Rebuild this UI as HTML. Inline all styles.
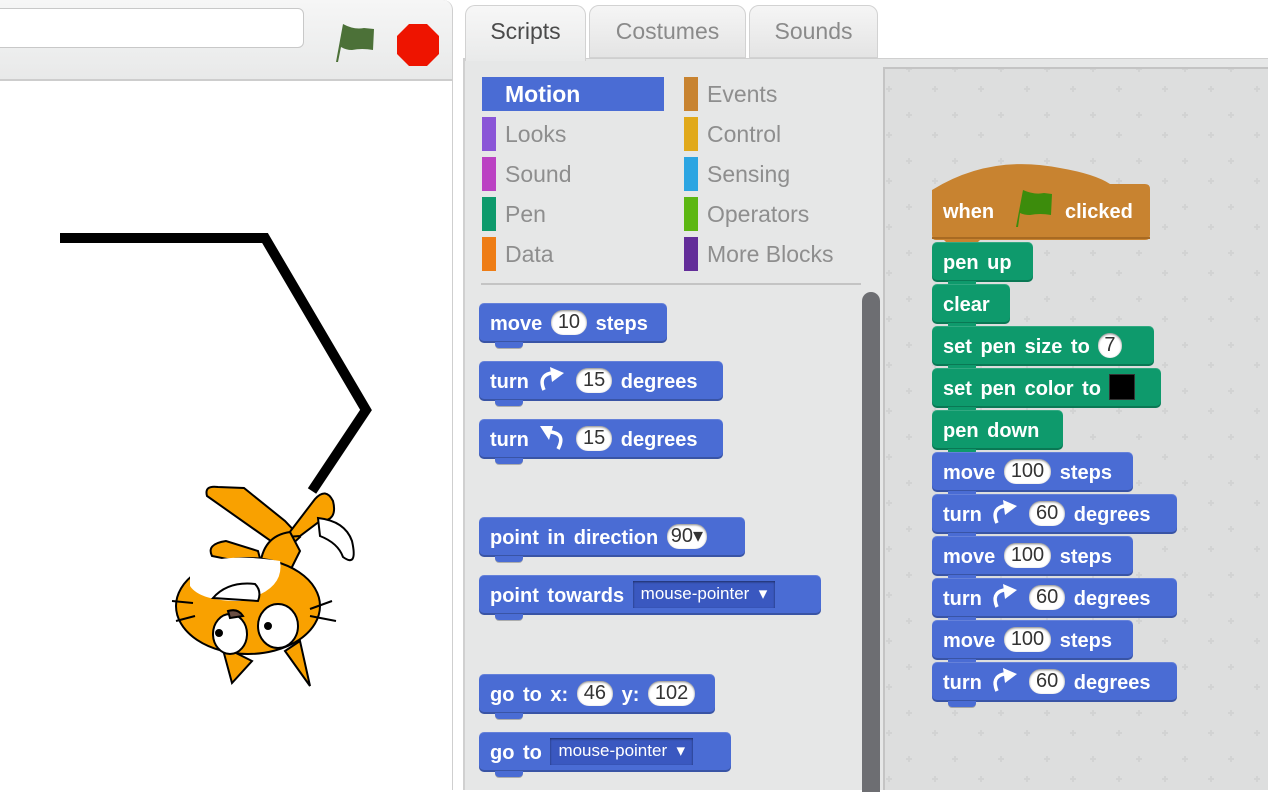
<!DOCTYPE html>
<html><head><meta charset="utf-8"><style>
*{margin:0;padding:0;box-sizing:border-box}
body{width:1268px;height:790px;overflow:hidden;background:#fff;position:relative;font-family:"Liberation Sans",sans-serif}
.abs{position:absolute}
.blk{position:absolute;height:40px;border-radius:5px;color:#fff;font-weight:bold;font-size:20px;word-spacing:3px;line-height:43px;padding-left:11px;white-space:nowrap;box-shadow:inset 0 -2px 0 rgba(0,0,0,.22),inset 0 1px 0 rgba(255,255,255,.15)}
.blk::after{content:"";position:absolute;left:16px;bottom:-5px;width:28px;height:6px;background:inherit;border-radius:0 0 4px 4px;box-shadow:0 1px 0 rgba(0,0,0,.25)}
.m{background:#4a6cd4}
.p{background:#0e9a6c}
.in{display:inline-block;background:#fff;color:#333;font-weight:normal;border-radius:12px;padding:0 7px;height:25px;line-height:25px;vertical-align:middle;margin-top:-5px;word-spacing:0;box-shadow:inset 0 1px 2px rgba(0,0,0,.5)}
.dd{display:inline-block;background:#3a58c0;color:#fff;font-weight:normal;font-size:17px;height:27px;line-height:25px;padding:0 8px;vertical-align:middle;margin-top:-5px;word-spacing:0;box-shadow:inset 0 1px 2px rgba(0,0,0,.5)}
.cat{position:absolute;font-size:23px;color:#8e8e8e;height:34px;line-height:34px;white-space:nowrap;width:180px}
.cat i{position:absolute;left:0;top:0;width:14px;height:34px}
.cat span{position:absolute;left:23px;top:0}
.ar{display:inline-block;vertical-align:middle;margin-top:-6px}
</style></head><body>

<div class="abs" style="left:0;top:0;width:453px;height:81px;background:linear-gradient(#f6f6f6,#e8e9e9);border-right:1px solid #cfcfcf;border-bottom:2px solid #cdcdcd;border-radius:0 10px 0 0"></div>
<div class="abs" style="left:-10px;top:8px;width:314px;height:40px;background:#fff;border:1px solid #c8c8c8;border-radius:6px"></div>
<svg class="abs" style="left:330px;top:20px" width="50" height="45"><path d="M6 42 L13 4 Q24 10 34 8 L44 9 L43 30 Q32 28 22 30 Q16 30 11 27 L8 42 Z" fill="#4c7138"/></svg>
<svg class="abs" style="left:396px;top:23px" width="46" height="46"><polygon points="13,1 31,1 43,13 43,31 31,43 13,43 1,31 1,13" fill="#ee1400"/></svg>
<div class="abs" style="left:0;top:81px;width:453px;height:709px;background:#fff;border-right:1px solid #cfcfcf"></div>

<svg class="abs" style="left:0;top:81px" width="452" height="709">
<polyline points="60,157 265,157 366,329 312,410" fill="none" stroke="#000" stroke-width="10" stroke-linejoin="miter"/>
<g stroke="#000" stroke-width="2" fill="#f9a100">
<path d="M207 415 Q204 404 218 406 L244 407 L285 440 L300 456 L285 470 Z"/>
<path d="M212 475 Q206 463 226 460 L258 470 L262 485 Z"/>
<path d="M286 456 L315 418 Q326 406 333 420 Q338 440 320 440 L300 455 Z"/>
<path d="M318 437 Q345 440 352 460 Q358 487 343 476 Q338 462 320 455 Z" fill="#fff"/>
<path d="M260 487 Q262 455 290 451 L300 470 L290 490 Z"/>
<ellipse cx="248" cy="525" rx="72" ry="48"/>
<path d="M190 490 Q215 470 280 480 Q285 510 240 520 Q200 520 190 505 Z" fill="#fff" stroke="none"/>
<path d="M213 517 Q228 500 255 503 Q262 510 258 520 Z" fill="#fff"/>
<path d="M222 565 L232 602 L252 580 Z"/>
<path d="M285 570 L310 605 L300 560 Z"/>
<ellipse cx="230" cy="553" rx="17" ry="20" fill="#fff"/>
<ellipse cx="278" cy="545" rx="20" ry="22" fill="#fff"/>
<circle cx="219" cy="552" r="3" fill="#000"/>
<circle cx="268" cy="545" r="3" fill="#000"/>
<path d="M228 530 Q238 527 243 535 L230 537 Z" fill="#6b4f44"/>
<path d="M172 520 L193 522 M176 540 L195 535 M310 528 L332 520 M310 535 L336 540" fill="none"/>
</g>
</svg>

<div class="abs" style="left:463px;top:58px;width:805px;height:732px;background:#e6e7e7;border-left:2px solid #d0d0d0;border-top:1px solid #cfcfcf"></div>
<div class="abs" style="left:465px;top:5px;width:121px;height:56px;background:linear-gradient(#f7f7f7,#e9eaea);border:1px solid #d2d2d2;border-bottom:none;border-radius:10px 10px 0 0;font-size:23px;color:#4a4a4a;text-align:center;line-height:50px">Scripts</div>
<div class="abs" style="left:589px;top:5px;width:157px;height:53px;background:linear-gradient(#f5f5f5,#e4e4e4);border:1px solid #d2d2d2;border-radius:10px 10px 0 0;font-size:23px;color:#8a8a8a;text-align:center;line-height:50px">Costumes</div>
<div class="abs" style="left:749px;top:5px;width:129px;height:53px;background:linear-gradient(#f5f5f5,#e4e4e4);border:1px solid #d2d2d2;border-radius:10px 10px 0 0;font-size:23px;color:#8a8a8a;text-align:center;line-height:50px">Sounds</div>

<div class="abs" style="left:482px;top:77px;width:182px;height:34px;background:#4a6cd4"></div>
<div class="abs" style="left:505px;top:77px;font-size:23px;font-weight:bold;color:#fff;line-height:34px">Motion</div>
<div class="cat" style="left:482px;top:117px"><i style="background:#8a55d7"></i><span>Looks</span></div>
<div class="cat" style="left:482px;top:157px"><i style="background:#bb42c3"></i><span>Sound</span></div>
<div class="cat" style="left:482px;top:197px"><i style="background:#0e9a6c"></i><span>Pen</span></div>
<div class="cat" style="left:482px;top:237px"><i style="background:#ee7d16"></i><span>Data</span></div>
<div class="cat" style="left:684px;top:77px"><i style="background:#c88330"></i><span>Events</span></div>
<div class="cat" style="left:684px;top:117px"><i style="background:#e1a91a"></i><span>Control</span></div>
<div class="cat" style="left:684px;top:157px"><i style="background:#2ca5e2"></i><span>Sensing</span></div>
<div class="cat" style="left:684px;top:197px"><i style="background:#5cb712"></i><span>Operators</span></div>
<div class="cat" style="left:684px;top:237px"><i style="background:#632d99"></i><span>More Blocks</span></div>
<div class="abs" style="left:481px;top:283px;width:380px;height:2px;background:#c4c4c4"></div>
<div class="abs" style="left:862px;top:292px;width:18px;height:500px;background:#6d6e72;border-radius:9px 9px 0 0"></div>

<div class="abs" style="left:883px;top:67px;width:385px;height:723px;border-left:2px solid #c4c4c4;border-top:2px solid #c4c4c4;background-color:#dddede">
<svg width="385" height="723" style="position:absolute;left:0;top:0"><defs><pattern id="g" width="46" height="46" patternUnits="userSpaceOnUse" x="-6" y="-6"><path d="M30 3v6M27 6h6M10 23v6M7 26h6" stroke="#d2d3d3" stroke-width="2"/></pattern></defs><rect width="385" height="723" fill="url(#g)"/></svg>
</div>

<div class="blk m" style="left:479px;top:303px;width:188px">move <span class="in">10</span> steps</div>
<div class="blk m" style="left:479px;top:361px;width:244px">turn <svg class="ar" width="30" height="26"><path d="M7 23 Q1 9 14 6" fill="none" stroke="#fff" stroke-width="3.5"/><path d="M13 0 L27 6 L15 15 Z" fill="#fff"/></svg> <span class="in">15</span> degrees</div>
<div class="blk m" style="left:479px;top:419px;width:244px">turn <svg class="ar" width="30" height="26"><path d="M21 24 Q29 9 14 7" fill="none" stroke="#fff" stroke-width="3.5"/><path d="M3 1 L16 1 L12 15 Z" fill="#fff"/></svg> <span class="in">15</span> degrees</div>
<div class="blk m" style="left:479px;top:517px;width:266px">point in direction <span class="in" style="padding:0 4px">90▾</span></div>
<div class="blk m" style="left:479px;top:575px;width:342px">point towards <span class="dd">mouse-pointer&nbsp; ▾</span></div>
<div class="blk m" style="left:479px;top:674px;width:236px">go to x: <span class="in">46</span> y: <span class="in">102</span></div>
<div class="blk m" style="left:479px;top:732px;width:252px">go to <span class="dd">mouse-pointer&nbsp; ▾</span></div>

<svg class="abs" style="left:930px;top:160px" width="224" height="84"><path d="M2 30 Q60 -6 130 8 Q165 14 180 24 L215 24 Q220 24 220 29 L220 75 Q220 80 215 80 L50 80 L44 86 L20 86 L14 80 L6 80 Q2 80 2 75 Z" fill="#c88330"/><path d="M2 78 L220 78" stroke="#a86a22" stroke-width="2"/></svg>
<div class="abs" style="left:943px;top:199px;color:#fff;font-weight:bold;font-size:20px;line-height:26px">when</div>
<svg class="abs" style="left:1010px;top:187px" width="46" height="44"><path d="M6 40 L13 3 Q24 8 34 6 L42 7 L41 28 Q30 26 20 28 Q14 28 10 26 L8 40 Z" fill="#3c8c0c"/></svg>
<div class="abs" style="left:1065px;top:199px;color:#fff;font-weight:bold;font-size:20px;line-height:26px">clicked</div>

<div class="blk p" style="left:932px;top:242px;width:101px">pen up</div>
<div class="blk p" style="left:932px;top:284px;width:78px">clear</div>
<div class="blk p" style="left:932px;top:326px;width:222px">set pen size to <span class="in" style="padding:0 6px">7</span></div>
<div class="blk p" style="left:932px;top:368px;width:229px">set pen color to <span style="display:inline-block;width:26px;height:26px;background:#000;vertical-align:middle;margin-top:-5px;border:1px solid #333"></span></div>
<div class="blk p" style="left:932px;top:410px;width:131px">pen down</div>
<div class="blk m" style="left:932px;top:452px;width:201px">move <span class="in">100</span> steps</div>
<div class="blk m" style="left:932px;top:494px;width:245px">turn <svg class="ar" width="30" height="26"><path d="M7 23 Q1 9 14 6" fill="none" stroke="#fff" stroke-width="3.5"/><path d="M13 0 L27 6 L15 15 Z" fill="#fff"/></svg> <span class="in">60</span> degrees</div>
<div class="blk m" style="left:932px;top:536px;width:201px">move <span class="in">100</span> steps</div>
<div class="blk m" style="left:932px;top:578px;width:245px">turn <svg class="ar" width="30" height="26"><path d="M7 23 Q1 9 14 6" fill="none" stroke="#fff" stroke-width="3.5"/><path d="M13 0 L27 6 L15 15 Z" fill="#fff"/></svg> <span class="in">60</span> degrees</div>
<div class="blk m" style="left:932px;top:620px;width:201px">move <span class="in">100</span> steps</div>
<div class="blk m" style="left:932px;top:662px;width:245px">turn <svg class="ar" width="30" height="26"><path d="M7 23 Q1 9 14 6" fill="none" stroke="#fff" stroke-width="3.5"/><path d="M13 0 L27 6 L15 15 Z" fill="#fff"/></svg> <span class="in">60</span> degrees</div>
</body></html>
